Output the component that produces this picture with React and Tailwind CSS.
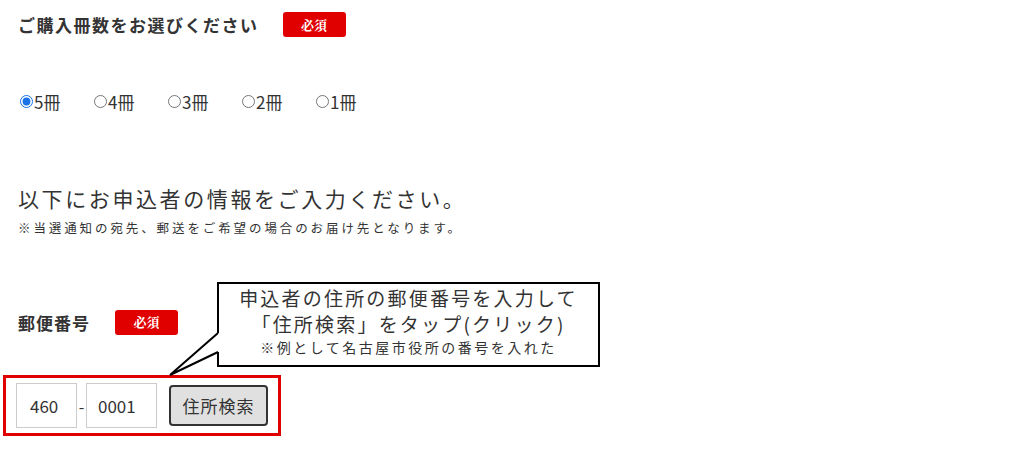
import React, { useState } from 'react';

const jp = { fontFamily: '"Noto Sans CJK JP", "Noto Sans", sans-serif' };

const Badge = () => (
  <span className="inline-flex h-[25px] w-[63px] items-center justify-center rounded-[3px] bg-[#e00000] text-[13px] font-bold text-white" style={{ fontFamily: '"Noto Serif CJK JP", "Noto Sans CJK JP", serif' }}>
    必須
  </span>
);

const App = () => {
  const [count, setCount] = useState('5');
  const options = ['5', '4', '3', '2', '1'];

  return (
    <div className="relative h-[455px] w-[1024px] overflow-hidden bg-white pl-[18px] pt-[12px] text-[#333]" style={jp}>
      {/* 冊数 */}
      <div className="flex h-[25px] items-center gap-[24px]">
        <h2 className="text-[17px] font-bold leading-none tracking-[1.5px]">ご購入冊数をお選びください</h2>
        <Badge />
      </div>

      <div className="mt-[54px] flex h-[20px] items-center pl-[2px]">
        {options.map(n => (
          <label key={n} className="flex w-[74px] items-center gap-[1px] text-[17px] leading-none">
            <input
              type="radio"
              name="count"
              value={n}
              checked={count === n}
              onChange={() => setCount(n)}
              className="h-[13px] w-[13px] accent-[#1a73e8]"
            />
            {n}冊
          </label>
        ))}
      </div>

      {/* 申込者情報 */}
      <p className="mt-[73px] text-[21px] leading-[28px] tracking-[2.6px]">以下にお申込者の情報をご入力ください。</p>
      <p className="mt-[7px] text-[12.5px] leading-[18px] tracking-[2.9px]">※当選通知の宛先、郵送をご希望の場合のお届け先となります。</p>

      <div className="mt-[73px] flex h-[24px] items-center gap-[25px]">
        <h3 className="text-[17px] font-bold leading-none tracking-[1px]">郵便番号</h3>
        <Badge />
      </div>

      <div className="-ml-[15px] mt-[41px] inline-flex items-center border-[3px] border-[#e00000] px-[10px] py-[5px]">
        <input
          defaultValue="460"
          className="h-[45px] w-[61px] border border-[#ccc] pl-[13px] text-[17px] text-[#333] outline-none"
        />
        <span className="w-[9px] text-center text-[16px]">-</span>
        <input
          defaultValue="0001"
          className="h-[45px] w-[71px] border border-[#ccc] pl-[11px] text-[17px] text-[#333] outline-none"
        />
        <button className="ml-[12px] h-[41px] w-[99px] rounded-[4px] border-2 border-[#333] bg-[#e0e0e0] text-[17px] tracking-[1px] text-[#333]">
          住所検索
        </button>
      </div>

      {/* 吹き出し */}
      <div className="absolute left-[217px] top-[282px] flex h-[85px] w-[383px] flex-col items-center border-2 border-black bg-white pt-[1px]">
        <p className="text-[19px] leading-[26px] tracking-[2.2px]">申込者の住所の郵便番号を入力して</p>
        <p className="text-[19px] leading-[26px] tracking-[2.2px]">「住所検索」をタップ(クリック)</p>
        <p className="text-[14px] leading-[20px] tracking-[2.5px]">※例として名古屋市役所の番号を入れた</p>
      </div>
      <svg className="absolute left-[160px] top-[320px]" width="70" height="60" viewBox="0 0 70 60">
        <polygon points="58,13 10,55 58,32 61,32 61,13" fill="white" />
        <polyline points="58,13 10,55 58,32" fill="none" stroke="black" strokeWidth="2" strokeLinejoin="miter" />
      </svg>
    </div>
  );
};

export default App;
